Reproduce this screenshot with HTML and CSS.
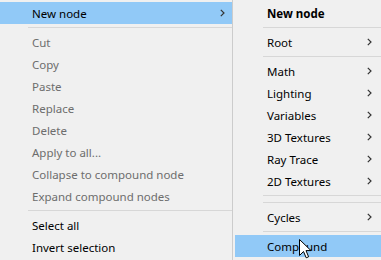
FILE: index.html
```html
<!DOCTYPE html>
<html lang="en">
<head>
    <meta charset="UTF-8">
    <meta name="viewport" content="width=device-width, initial-scale=1.0">
    <title>Context menu</title>
    <link rel="stylesheet" href="styles.css">
</head>
<body>
    <div class="screen">
        <!-- main context menu -->
        <ul class="menu menu_main">
            <li class="item active"><span>New node</span><svg class="chev" viewBox="0 0 5 8"><polyline points="0.8,0.8 4,4 0.8,7.2"/></svg></li>
            <li class="sep"></li>
            <li class="item disabled">Cut</li>
            <li class="item disabled">Copy</li>
            <li class="item disabled">Paste</li>
            <li class="item disabled">Replace</li>
            <li class="item disabled">Delete</li>
            <li class="item disabled">Apply to all...</li>
            <li class="item disabled">Collapse to compound node</li>
            <li class="item disabled">Expand compound nodes</li>
            <li class="sep"></li>
            <li class="item">Select all</li>
            <li class="item">Invert selection</li>
        </ul>

        <!-- New node submenu -->
        <ul class="menu menu_sub">
            <li class="item title">New node</li>
            <li class="sep"></li>
            <li class="item"><span>Root</span><svg class="chev" viewBox="0 0 5 8"><polyline points="0.8,0.8 4,4 0.8,7.2"/></svg></li>
            <li class="sep"></li>
            <li class="item"><span>Math</span><svg class="chev" viewBox="0 0 5 8"><polyline points="0.8,0.8 4,4 0.8,7.2"/></svg></li>
            <li class="item"><span>Lighting</span><svg class="chev" viewBox="0 0 5 8"><polyline points="0.8,0.8 4,4 0.8,7.2"/></svg></li>
            <li class="item"><span>Variables</span><svg class="chev" viewBox="0 0 5 8"><polyline points="0.8,0.8 4,4 0.8,7.2"/></svg></li>
            <li class="item"><span>3D Textures</span><svg class="chev" viewBox="0 0 5 8"><polyline points="0.8,0.8 4,4 0.8,7.2"/></svg></li>
            <li class="item"><span>Ray Trace</span><svg class="chev" viewBox="0 0 5 8"><polyline points="0.8,0.8 4,4 0.8,7.2"/></svg></li>
            <li class="item"><span>2D Textures</span><svg class="chev" viewBox="0 0 5 8"><polyline points="0.8,0.8 4,4 0.8,7.2"/></svg></li>
            <li class="sep"></li>
            <li class="sep"></li>
            <li class="item"><span>Cycles</span><svg class="chev" viewBox="0 0 5 8"><polyline points="0.8,0.8 4,4 0.8,7.2"/></svg></li>
            <li class="sep"></li>
            <li class="item active">Compound</li>
        </ul>

        <!-- mouse pointer -->
        <svg class="cursor" viewBox="0 0 13 21" width="13" height="21">
            <path d="M0.5 0.5 L0.5 16.5 L4.5 12.5 L7.2 18.8 L9.6 17.8 L7 11.6 L12 11.6 Z"/>
        </svg>
    </div>
</body>
</html>
```

FILE: styles.css
```css
*{
    margin: 0;
    padding: 0;
    box-sizing: border-box;
}
body{
    background: #f0f0f0;
    font-family: "Noto Sans", "Open Sans", sans-serif;
    font-size: 11.5px;
    color: #000;
}
li{
    list-style: none;
}
.screen{
    display: flex;
    width: 381px;
    height: 260px;
    overflow: hidden;
    position: relative;
}
.menu{
    padding-top: 2px;
    background: #f0f0f0;
}
.menu_main{
    width: 232px;
    flex-shrink: 0;
}
.menu_sub{
    width: 150px;
    flex-shrink: 0;
    border-left: 1px solid #cccccc;
    padding-left: 2px;
}
.menu .item{
    height: 22px;
    display: flex;
    align-items: center;
    justify-content: space-between;
    padding-left: 32px;
    padding-right: 7px;
    white-space: nowrap;
}
.menu_sub .item{
    padding-right: 10px;
}
.menu .item.active{
    background: #91c9f7;
}
.menu .item.disabled{
    color: #6d6d6d;
}
.menu .item.title{
    font-weight: bold;
}
.menu .sep{
    height: 7px;
    padding: 3px 0 3px 28px;
}
.menu .sep::after{
    content: "";
    display: block;
    height: 1px;
    background: #d7d7d7;
}
.chev{
    width: 5px;
    height: 8px;
}
.chev polyline{
    fill: none;
    stroke: #333;
    stroke-width: 1.2;
}
.cursor{
    position: absolute;
    left: 299px;
    top: 239px;
}
.cursor path{
    fill: #fff;
    stroke: #000;
    stroke-width: 1;
    stroke-linejoin: miter;
}
```
